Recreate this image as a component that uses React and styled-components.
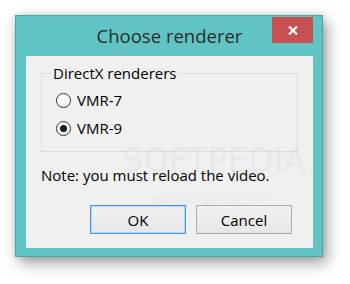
import React from "react";
import styled, { createGlobalStyle } from "styled-components";

const Global = createGlobalStyle`
  html, body { margin: 0; padding: 0; background: #ffffff; }
  body { font-family: "Open Sans", "Noto Sans", sans-serif; }
`;

const Page = styled.div`
  width: 350px;
  height: 284px;
  padding: 15px 0 0 15px;
  box-sizing: border-box;
`;

const Window = styled.div`
  position: relative;
  overflow: hidden;
  width: 308px;
  height: 242px;
  box-sizing: border-box;
  background: #61c4c4;
  border: 1px solid #4aa6a6;
  padding: 0 9px 8px 10px;
  display: flex;
  flex-direction: column;
  box-shadow: 4px 6px 14px rgba(0, 0, 0, 0.38), 0 0 6px rgba(0, 0, 0, 0.12);
`;

const TitleBar = styled.div`
  height: 40px;
  display: grid;
  grid-template-columns: 41px 1fr 41px;
  align-items: start;
`;

const Title = styled.div`
  grid-column: 2;
  text-align: center;
  font-size: 18.5px;
  line-height: 26px;
  padding-top: 7px;
  color: #2b2b2b;
`;

const CloseButton = styled.div`
  grid-column: 3;
  margin-top: 1px;
  width: 41px;
  height: 26px;
  background: #c75050;
  display: flex;
  align-items: center;
  justify-content: center;
`;

const Client = styled.div`
  flex: 1;
  background: #f0f0f0;
  padding: 7px 15px 0 15px;
  display: flex;
  flex-direction: column;
`;

const Group = styled.fieldset`
  margin: 0;
  border: 1px solid #dcdcdc;
  padding: 3px 9px 9px 9px;
  min-width: 0;
`;

const Legend = styled.legend`
  padding: 0 2px;
  font-size: 15px;
  line-height: 20px;
  color: #000;
`;

const Row = styled.label`
  height: 28px;
  display: flex;
  align-items: center;
  gap: 6px;
  margin-left: 5px;
  font-size: 15px;
  color: #000;
`;

const Radio = styled.span`
  width: 15px;
  height: 15px;
  box-sizing: border-box;
  border-radius: 50%;
  border: 1px solid #333;
  background: linear-gradient(#ffffff, #f4f4f4);
  display: flex;
  align-items: center;
  justify-content: center;
  &::after {
    content: "";
    width: 7px;
    height: 7px;
    border-radius: 50%;
    background: ${(p) => (p.$checked ? "#1a1a1a" : "transparent")};
  }
`;

const Note = styled.div`
  position: relative;
  z-index: 1;
  margin-top: 13px;
  font-size: 15px;
  line-height: 20px;
  color: #000;
`;

const Buttons = styled.div`
  position: relative;
  z-index: 1;
  margin-top: 20px;
  display: flex;
  justify-content: flex-end;
  gap: 10px;
  padding-right: 6px;
`;

const Button = styled.div`
  width: 96px;
  height: 29px;
  box-sizing: border-box;
  border: 1px solid ${(p) => (p.$default ? "#3c9cf2" : "#acacac")};
  box-shadow: ${(p) => (p.$default ? "inset 0 0 0 1px #b5d6f7" : "none")};
  background: linear-gradient(#f2f2f2, #e6e6e6);
  display: flex;
  align-items: center;
  justify-content: center;
  font-size: 15px;
  color: #000;
`;

const Watermark = styled.div`
  position: absolute;
  pointer-events: none;
  left: ${(p) => p.$x}px;
  top: ${(p) => p.$y}px;
  font-family: "DejaVu Sans", sans-serif;
  font-size: ${(p) => p.$size}px;
  line-height: 1;
  color: rgba(0, 0, 0, 0.05);
  white-space: nowrap;
`;

export default function App() {
  return (
    <Page>
      <Global />
      <Window>
        <TitleBar>
          <Title>Choose renderer</Title>
          <CloseButton>
            <svg width="10" height="9" viewBox="0 0 10 9">
              <path d="M1 0.5 L9 8.5 M9 0.5 L1 8.5" stroke="#fff" strokeWidth="2.2" />
            </svg>
          </CloseButton>
        </TitleBar>
        <Client>
          <Group>
            <Legend>DirectX renderers</Legend>
            <Row>
              <Radio />
              VMR-7
            </Row>
            <Row>
              <Radio $checked />
              VMR-9
            </Row>
          </Group>
          <Note>Note: you must reload the video.</Note>
          <Buttons>
            <Button $default>OK</Button>
            <Button>Cancel</Button>
          </Buttons>
        </Client>
        <Watermark $x={106} $y={128} $size={33}>SOFTPEDIA</Watermark>
        <Watermark $x={135} $y={178} $size={12}>www.softpedia.com</Watermark>
      </Window>
    </Page>
  );
}
